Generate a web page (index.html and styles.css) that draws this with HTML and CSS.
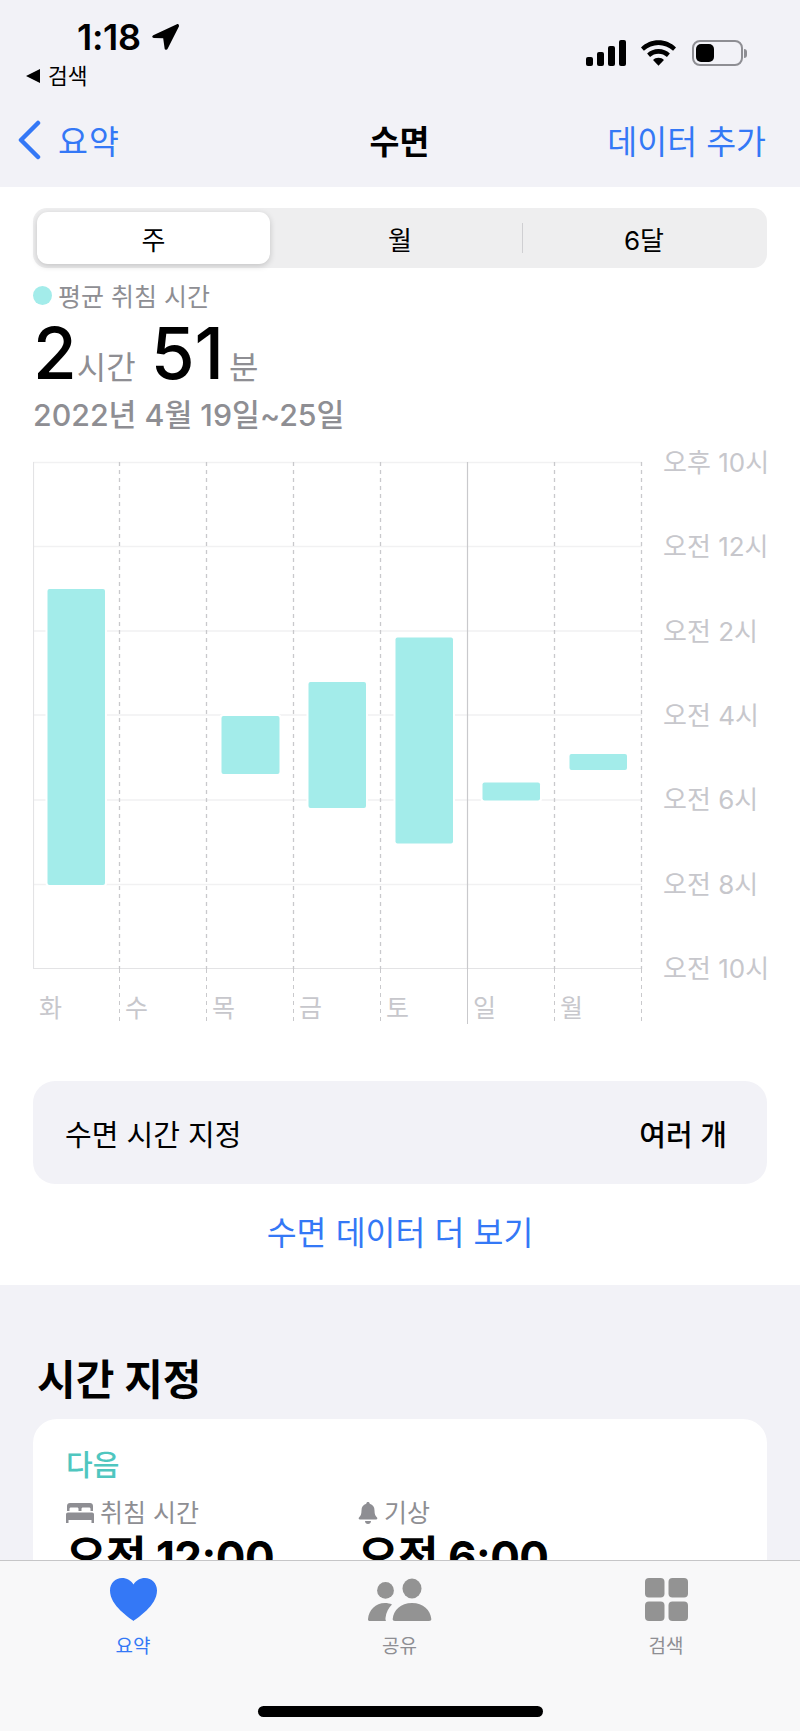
FILE: index.html
```html
<!DOCTYPE html>
<html lang="ko">
<head>
  <meta charset="UTF-8">
  <meta name="viewport" content="width=device-width, initial-scale=1.0">
  <title>수면</title>
  <link rel="stylesheet" href="styles.css">
</head>
<body>
<div class="phone">

  <div class="content">

    <!-- Status bar and nav -->
    <div class="top-bar">
      <div class="status">
        <div class="status-left">
          <div class="clock">
            <span>1:18</span>
            <svg class="arrow-icon" viewBox="0 0 28 28"><path d="M25.800.3 1.300 11.600c-1.700.8-1.200 3 .7 3l9.600.3 1.500 10.400c.3 1.800 2.500 2.100 3.100.4L27.900 2.600c.5-1.600-.8-3-2.100-2.300z"/></svg>
          </div>
          <div class="back-app"><span class="back-tri"></span>검색</div>
        </div>
        <div class="status-right">
          <svg class="signal-icon" viewBox="0 0 40 26">
            <rect x="0" y="17" width="7" height="9" rx="2"/>
            <rect x="11" y="12" width="7" height="14" rx="2"/>
            <rect x="22" y="6" width="7" height="20" rx="2"/>
            <rect x="33" y="0" width="7" height="26" rx="2"/>
          </svg>
          <svg class="wifi-icon" viewBox="0 0 36 26">
            <path d="M18 0C11 0 5 2.700 0 7.300l3 3.500C7.500 6.800 12.500 4.700 18 4.700s10.500 2.100 15 6.100l3-3.500C31 2.700 25 0 18 0z"/>
            <path d="M18 9c-4.600 0-8.500 1.700-11.700 4.600l3 3.500c2.400-2.200 5.300-3.400 8.700-3.400s6.300 1.200 8.700 3.400l3-3.500C26.500 10.700 22.600 9 18 9z"/>
            <path d="M18 18c-2.300 0-4.200.8-5.600 2.100L18 26l5.600-5.900C22.200 18.800 20.300 18 18 18z"/>
          </svg>
          <div class="battery"><div class="battery-fill"></div></div>
          <div class="battery-tip"></div>
        </div>
      </div>

      <div class="nav">
        <div class="nav-back">
          <svg class="chevron-icon" viewBox="0 0 24 40"><path d="M21 3 4 20l17 17" fill="none" stroke="#3478f6" stroke-width="4.500" stroke-linecap="round" stroke-linejoin="round"/></svg>
          <span>요약</span>
        </div>
        <div class="nav-title">수면</div>
        <div class="nav-action">데이터 추가</div>
      </div>
    </div>

    <!-- White sheet -->
    <div class="sheet">
      <div class="segments">
        <div class="segment active">주</div>
        <div class="segment middle">월</div>
        <div class="segment with-line">6달</div>
      </div>

      <div class="legend"><span class="dot"></span>평균 취침 시간</div>
      <div class="big-value">
        <span class="num">2</span><span class="unit">시간</span>
        <span class="num second">51</span><span class="unit minutes">분</span>
      </div>
      <div class="date-range">2022년 4월 19일~25일</div>

      <div class="chart">
        <div class="chart-main">
          <svg class="plot" viewBox="0 0 610 508" width="610" height="508">
            <g stroke="#f1f1f2" stroke-width="1.500">
              <line x1="0" x2="609" y1="1.500" y2="1.500"/>
              <line x1="0" x2="609" y1="85.500" y2="85.500"/>
              <line x1="0" x2="609" y1="170" y2="170"/>
              <line x1="0" x2="609" y1="254" y2="254"/>
              <line x1="0" x2="609" y1="339" y2="339"/>
              <line x1="0" x2="609" y1="423.500" y2="423.500"/>
            </g>
            <line x1="0" x2="609" y1="507.500" y2="507.500" stroke="#e3e3e5" stroke-width="1.200"/>
            <line x1="0.500" x2="0.500" y1="1" y2="507" stroke="#e3e3e5" stroke-width="1.200"/>
            <g fill="#a3ecea" stroke="#fff" stroke-width="4" paint-order="stroke">
              <rect x="14.500" y="128" width="57.500" height="296" rx="2"/>
              <rect x="188.500" y="255" width="58" height="58" rx="2"/>
              <rect x="275.500" y="221" width="57.500" height="126" rx="2"/>
              <rect x="362.500" y="176.500" width="57.500" height="206" rx="2"/>
              <rect x="449.500" y="321.500" width="57.500" height="18" rx="2"/>
              <rect x="536.500" y="293" width="57.500" height="16" rx="2"/>
            </g>
            <g stroke="#c9c9cc" stroke-width="1.300" stroke-dasharray="4 4">
              <line x1="86.500" x2="86.500" y1="1" y2="508"/>
              <line x1="173.500" x2="173.500" y1="1" y2="508"/>
              <line x1="260.500" x2="260.500" y1="1" y2="508"/>
              <line x1="347.500" x2="347.500" y1="1" y2="508"/>
              <line x1="521.500" x2="521.500" y1="1" y2="508"/>
              <line x1="608.500" x2="608.500" y1="1" y2="508"/>
            </g>
            <line x1="434.500" x2="434.500" y1="1" y2="508" stroke="#c9c9cc" stroke-width="1.200"/>
          </svg>
          <div class="days">
            <div class="day">화</div>
            <div class="day">수</div>
            <div class="day">목</div>
            <div class="day">금</div>
            <div class="day">토</div>
            <div class="day solid">일</div>
            <div class="day">월</div>
            <div class="day"></div>
          </div>
        </div>
        <div class="y-labels">
          <span>오후 10시</span>
          <span>오전 12시</span>
          <span>오전 2시</span>
          <span>오전 4시</span>
          <span>오전 6시</span>
          <span>오전 8시</span>
          <span>오전 10시</span>
        </div>
      </div>

      <div class="schedule-row">
        <span>수면 시간 지정</span>
        <span class="schedule-value">여러 개</span>
      </div>
      <div class="more-link">수면 데이터 더 보기</div>
    </div>

    <!-- Schedule section, cut off by the tab bar -->
    <div class="section">
      <h2 class="section-title">시간 지정</h2>
      <div class="card">
        <div class="card-label">다음</div>
        <div class="times">
          <div class="time-col">
            <div class="time-head">
              <svg class="bed-icon" viewBox="0 0 28 20"><path d="M4 0h20c1.800 0 3 1.200 3 3v5h-2.500V6c0-1-.5-1.500-1.500-1.500h-6c-1 0-1.500.5-1.500 1.500v2h-3V6c0-1-.5-1.500-1.500-1.500H5C4 4.500 3.500 5 3.500 6v2H1V3c0-1.800 1.200-3 3-3zM2 9.500h24c1.200 0 2 .8 2 2V20h-2.500v-3h-23v3H0v-8.500c0-1.200.8-2 2-2z"/></svg>
              <span>취침 시간</span>
            </div>
            <div class="time-value">오전 12:00</div>
          </div>
          <div class="time-col">
            <div class="time-head">
              <svg class="bell-icon" viewBox="0 0 20 22"><path d="M10 0c1 0 1.700.7 1.700 1.700C15 2.500 16.500 5 16.500 8.500c0 4 1 5.500 2.500 7 .7.700.3 2-.9 2H1.900c-1.200 0-1.600-1.300-.9-2 1.500-1.500 2.500-3 2.500-7C3.500 5 5 2.500 8.300 1.700 8.300.7 9 0 10 0zM7 19h6c0 1.700-1.300 3-3 3s-3-1.300-3-3z"/></svg>
              <span>기상</span>
            </div>
            <div class="time-value">오전 6:00</div>
          </div>
        </div>
      </div>
    </div>
  </div>

  <!-- Tab bar -->
  <div class="tab-bar">
    <div class="tabs">
      <div class="tab active">
        <svg class="tab-icon" viewBox="0 0 47 43"><path d="M23.500 43C20 40 0 28 0 12.500 0 5 5.500 0 12 0c5 0 9 2.500 11.500 6.500C26 2.500 30 0 35 0c6.500 0 12 5 12 12.500C47 28 27 40 23.500 43z" fill="#3478f6"/></svg>
        <span>요약</span>
      </div>
      <div class="tab">
        <svg class="tab-icon" viewBox="0 0 64 43">
          <g fill="#939393">
            <circle cx="17.500" cy="12.400" r="8.400"/>
            <ellipse cx="44" cy="10.500" rx="9.500" ry="10"/>
            <path d="M2 43c-1.300 0-2.200-.8-2-2 .8-9 7.500-16 17-16 2.500 0 5 .5 7 1.500-3.500 3.200-6 8-6.500 13.500-.1 1.200 0 2 .5 3z"/>
            <path d="M27 43c-1.500 0-2.500-.8-2.300-2 .8-9 8-16 19.300-16s18.500 7 19.300 16c.2 1.200-.8 2-2.300 2z"/>
          </g>
        </svg>
        <span>공유</span>
      </div>
      <div class="tab">
        <svg class="tab-icon" viewBox="0 0 43 43">
          <g fill="#939393">
            <rect x="0" y="0" width="19.500" height="19.500" rx="4"/>
            <rect x="23.500" y="0" width="19.500" height="19.500" rx="4"/>
            <rect x="0" y="23.500" width="19.500" height="19.500" rx="4"/>
            <rect x="23.500" y="23.500" width="19.500" height="19.500" rx="4"/>
          </g>
        </svg>
        <span>검색</span>
      </div>
    </div>
    <div class="home-indicator"></div>
  </div>

</div>
</body>
</html>
```

FILE: styles.css
```css
* {
  box-sizing: border-box;
}

html, body {
  margin: 0;
  padding: 0;
}

body {
  font-family: Inter, "Noto Sans CJK KR", sans-serif;
  background-color: #f2f2f7;
  color: #000;
}

.phone {
  width: 800px;
  height: 1731px;
  display: flex;
  flex-direction: column;
  overflow: hidden;
}

.content {
  flex: 1;
  min-height: 0;
  overflow: hidden;
}

/* Top bar */
.top-bar {
  height: 187px;
  background-color: #f2f2f7;
}

.status {
  height: 100px;
  display: flex;
  justify-content: space-between;
}

.status-left {
  padding-top: 18px;
}

.clock {
  display: flex;
  align-items: center;
  gap: 11px;
  margin-left: 77px;
  height: 38px;
  font-size: 36px;
  font-weight: 600;
  letter-spacing: -0.3px;
}

.arrow-icon {
  width: 27px;
  height: 27px;
}

.back-app {
  display: flex;
  align-items: center;
  gap: 8px;
  margin: 7px 0 0 26px;
  font-size: 21.500px;
  line-height: 26px;
}

.back-tri {
  width: 0;
  height: 0;
  border-top: 7.500px solid transparent;
  border-bottom: 7.500px solid transparent;
  border-right: 14px solid #000;
}

.status-right {
  display: flex;
  align-items: flex-start;
  padding: 40px 53px 0 0;
}

.signal-icon {
  width: 40px;
  height: 26px;
}

.wifi-icon {
  width: 35px;
  height: 26px;
  margin-left: 15px;
}

.battery {
  width: 51px;
  height: 26px;
  margin-left: 16px;
  padding: 2px;
  border: 2px solid #8e8e93;
  border-radius: 8px;
}

.battery-fill {
  width: 18px;
  height: 100%;
  background-color: #000;
  border-radius: 5px;
}

.battery-tip {
  width: 3px;
  height: 9px;
  margin: 9px 0 0 1px;
  background-color: #8e8e93;
  border-radius: 0 3px 3px 0;
}

.nav {
  display: grid;
  grid-template-columns: minmax(0, 1fr) auto minmax(0, 1fr);
  align-items: center;
  height: 76px;
  padding: 3px 34px 0 17px;
  font-size: 32.500px;
  white-space: nowrap;
}

.nav-back {
  display: flex;
  align-items: center;
  gap: 17px;
  letter-spacing: 1px;
  color: #3478f6;
}

.chevron-icon {
  width: 24px;
  height: 40px;
}

.nav-title {
  font-weight: 600;
  transform: translateX(8px);
}

.nav-action {
  text-align: right;
  color: #3478f6;
}

/* White sheet */
.sheet {
  height: 1098px;
  padding: 21px 33px 0;
  background-color: #fff;
}

.segments {
  display: grid;
  grid-template-columns: 233px 252px 1fr;
  height: 60px;
  padding: 4px;
  background-color: #eeeeef;
  border-radius: 14px;
  font-size: 26px;
}

.segment {
  display: flex;
  align-items: center;
  justify-content: center;
}

.segment.active {
  background-color: #fff;
  border-radius: 11px;
  box-shadow: 0 2px 6px rgba(0, 0, 0, 0.18);
}

.segment.middle {
  padding-left: 8px;
}

.segment.with-line {
  position: relative;
  padding-left: 3px;
}

.segment.with-line::before {
  content: "";
  position: absolute;
  left: 0;
  top: 11px;
  bottom: 11px;
  width: 1px;
  background-color: #cfcfd2;
}

.legend {
  display: flex;
  align-items: center;
  gap: 6px;
  height: 36px;
  margin-top: 9px;
  font-size: 25px;
  color: #8e8e93;
}

.dot {
  width: 19px;
  height: 19px;
  border-radius: 50%;
  background-color: #a3ecea;
}

.big-value {
  display: flex;
  align-items: baseline;
  height: 70px;
  margin-top: 5px;
}

.num {
  font-size: 71px;
  line-height: 70px;
  font-weight: 500;
}

.num.second {
  margin-left: 15px;
}

.unit {
  font-size: 32px;
  color: #8e8e93;
}

.unit.minutes {
  margin-left: 5px;
}

.date-range {
  height: 40px;
  margin-top: 7px;
  font-size: 30.300px;
  line-height: 40px;
  font-weight: 500;
  color: #8e8e93;
}

.chart {
  display: flex;
  margin-top: 26px;
  height: 563px;
}

.chart-main {
  width: 630px;
  flex: none;
}

.plot {
  display: block;
}

.days {
  display: grid;
  grid-template-columns: 86px repeat(6, 87px) 2px;
  height: 55px;
  width: 610px;
}

.day {
  padding: 23px 0 0 6px;
  font-size: 25px;
  line-height: 32px;
  color: #c7c7cc;
  background-image: repeating-linear-gradient(#c9c9cc 0 4px, transparent 4px 8px);
  background-size: 1px 100%;
  background-repeat: no-repeat;
}

.day:first-child {
  background-image: none;
}

.day.solid {
  background-image: linear-gradient(#c9c9cc, #c9c9cc);
}

.y-labels {
  display: flex;
  flex-direction: column;
  justify-content: space-between;
  height: 540px;
  margin-top: -15px;
  font-size: 26px;
  line-height: 34px;
  white-space: nowrap;
  color: #c7c7cc;
}

.schedule-row {
  display: flex;
  justify-content: space-between;
  align-items: center;
  height: 103px;
  margin-top: 57px;
  padding: 0 40px 0 32px;
  background-color: #f2f2f7;
  border-radius: 22px;
  font-size: 29px;
}

.schedule-value {
  font-weight: 500;
}

.more-link {
  margin-top: 28px;
  text-align: center;
  font-size: 32.500px;
  line-height: 44px;
  color: #3478f6;
}

/* Schedule section */
.section {
  padding: 65px 33px 0;
}

.section-title {
  margin: 5px 0 0 4px;
  height: 64px;
  font-size: 42px;
  line-height: 50px;
  font-weight: 700;
}

.card {
  height: 300px;
  padding: 28px 33px;
  background-color: #fff;
  border-radius: 24px;
}

.card-label {
  font-size: 29px;
  line-height: 38px;
  font-weight: 500;
  color: #4fc6bf;
}

.times {
  display: flex;
  margin-top: 10px;
}

.time-col {
  width: 292px;
}

.time-head {
  display: flex;
  align-items: center;
  gap: 6px;
  font-size: 25px;
  line-height: 36px;
  color: #8e8e93;
}

.bed-icon {
  width: 28px;
  height: 20px;
  fill: #8e8e93;
}

.bell-icon {
  width: 20px;
  height: 22px;
  fill: #8e8e93;
}

.time-value {
  font-size: 44px;
  line-height: 52px;
  font-weight: 700;
  letter-spacing: -0.5px;
  white-space: nowrap;
}

/* Tab bar */
.tab-bar {
  flex: none;
  height: 171px;
  background-color: #f8f8f9;
  border-top: 1px solid #c6c6c8;
}

.tabs {
  display: grid;
  grid-template-columns: repeat(3, 134px);
  justify-content: space-between;
  padding: 17px 67px 0 66px;
}

.tab {
  display: flex;
  flex-direction: column;
  align-items: center;
  gap: 13px;
  font-size: 19px;
  line-height: 26px;
  color: #8e8e93;
}

.tab.active {
  color: #3478f6;
}

.tab-icon {
  height: 43px;
}

.home-indicator {
  width: 285px;
  height: 11px;
  margin: 46px auto 0;
  background-color: #000;
  border-radius: 6px;
}
```
